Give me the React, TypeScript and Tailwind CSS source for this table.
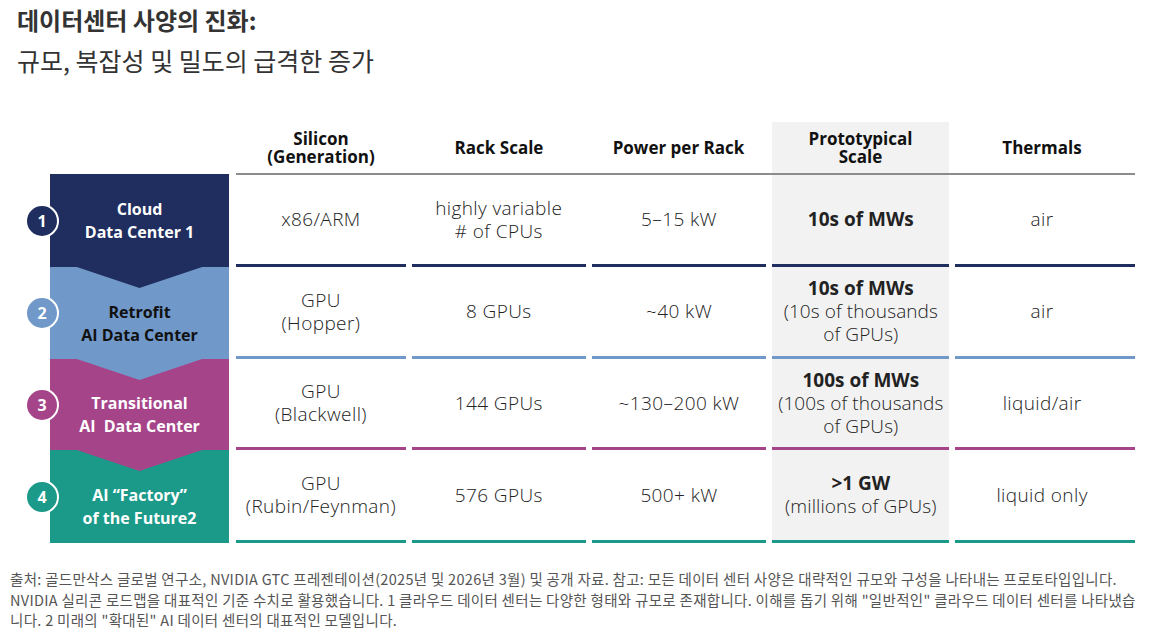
const rows = [
  {
    n: "1",
    label: ["Cloud", "Data Center 1"],
    color: "bg-[#1f2e5e]",
    line: "border-[#1f2e5e]",
    labelText: "text-white",
    h: "h-[92px]",
    silicon: ["x86/ARM"],
    rack: ["highly variable", "# of CPUs"],
    power: "5–15 kW",
    scaleBold: "10s of MWs",
    scale: [] as string[],
    thermals: "air",
  },
  {
    n: "2",
    label: ["Retrofit", "AI Data Center"],
    color: "bg-[#7098c9]",
    line: "border-[#7098c9]",
    labelText: "text-[#111]",
    h: "h-[92px]",
    silicon: ["GPU", "(Hopper)"],
    rack: ["8 GPUs"],
    power: "~40 kW",
    scaleBold: "10s of MWs",
    scale: ["(10s of thousands", "of GPUs)"],
    thermals: "air",
  },
  {
    n: "3",
    label: ["Transitional", "AI  Data Center"],
    color: "bg-[#a6448a]",
    line: "border-[#a6448a]",
    labelText: "text-white",
    h: "h-[91px]",
    silicon: ["GPU", "(Blackwell)"],
    rack: ["144 GPUs"],
    power: "~130–200 kW",
    scaleBold: "100s of MWs",
    scale: ["(100s of thousands", "of GPUs)"],
    thermals: "liquid/air",
  },
  {
    n: "4",
    label: ["AI “Factory”", "of the Future2"],
    color: "bg-[#1b9a89]",
    line: "border-[#1b9a89]",
    labelText: "text-white",
    h: "h-[93px]",
    silicon: ["GPU", "(Rubin/Feynman)"],
    rack: ["576 GPUs"],
    power: "500+ kW",
    scaleBold: ">1 GW",
    scale: ["(millions of GPUs)"],
    thermals: "liquid only",
  },
];

const tipColors = ["bg-[#1f2e5e]", "bg-[#7098c9]", "bg-[#a6448a]"];

const Cell = ({
  children,
  line,
  width,
  gray,
}: {
  children: React.ReactNode;
  line: string;
  width: string;
  gray?: boolean;
}) => (
  <div
    className={`${width} flex flex-col items-center justify-center border-b-[3px] text-center leading-[23px] ${line} ${
      gray ? "bg-[#f2f2f2]" : ""
    }`}
  >
    {children}
  </div>
);

const App = () => {
  return (
    <div
      className="w-[1155px] h-[639px] bg-white text-[#222] overflow-hidden"
      style={{ fontFamily: '"Open Sans", "Noto Sans CJK KR", sans-serif' }}
    >
      <div
        className="pl-[17px] text-[#333]"
        style={{ fontFamily: '"Noto Sans CJK KR", sans-serif' }}
      >
        <h1 className="text-[24px] font-bold leading-[40px]">
          데이터센터 사양의 진화:
        </h1>
        <h2 className="text-[25px] leading-[40px]">
          규모, 복잡성 및 밀도의 급격한 증가
        </h2>
      </div>

      <div className="mt-[42px]">
        {/* header */}
        <div className="flex h-[53px] ml-[236px] w-[899px] border-b-2 border-[#8c8c8c] text-[17px] font-bold leading-[18px] text-[#111]">
          <div className="w-[176px] pr-[6px] flex items-center justify-center text-center">
            Silicon
            <br />
            (Generation)
          </div>
          <div className="w-[179px] pr-[5px] flex items-center justify-center">
            Rack Scale
          </div>
          <div className="w-[181px] pr-[6px] flex items-center justify-center">
            Power per Rack
          </div>
          <div className="w-[177px] flex items-center justify-center text-center bg-[#f2f2f2]">
            Prototypical
            <br />
            Scale
          </div>
          <div className="w-[186px] pl-[6px] pr-[6px] flex items-center justify-center">
            Thermals
          </div>
        </div>

        {rows.map((r, i) => (
          <div key={r.n} className={`flex ${r.h} text-[19px] tracking-[0.4px] font-light`}>
            <div className="w-[236px] flex items-stretch tracking-normal">
              <div className="ml-[25px] self-center relative z-20 w-[34px] h-[34px] rounded-full flex items-center justify-center">
                <div
                  className={`absolute inset-0 rounded-full ${r.color} border-2 border-white`}
                />
                <span className="relative text-[16px] font-bold text-white">{r.n}</span>
              </div>
              <div
                className={`-ml-[9px] w-[179px] relative ${r.color} ${r.labelText} flex flex-col items-center justify-center text-[16px] font-bold leading-[23px] ${
                  i === 0 ? "-mt-[1px]" : "pt-[21px]"
                }`}
              >
                {i > 0 && (
                  <div
                    className={`absolute left-0 top-0 w-full h-[21px] z-10 ${tipColors[i - 1]} [clip-path:polygon(0_0,100%_0,100%_0,85%_0,50%_100%,15%_0,0_0)]`}
                  />
                )}
                <div className="relative z-10 text-center">
                  <div>{r.label[0]}</div>
                  <div className="whitespace-pre">{r.label[1]}</div>
                </div>
              </div>
            </div>
            <div className="flex gap-[6px] w-[899px]">
              <Cell line={r.line} width="w-[170px]">
                {r.silicon.map((s) => (
                  <div key={s}>{s}</div>
                ))}
              </Cell>
              <Cell line={r.line} width="w-[174px]">
                {r.rack.map((s) => (
                  <div key={s}>{s}</div>
                ))}
              </Cell>
              <Cell line={r.line} width="w-[175px]">
                {r.power}
              </Cell>
              <Cell line={r.line} width="w-[177px]" gray>
                <div className="font-bold tracking-normal">{r.scaleBold}</div>
                {r.scale.map((s) => (
                  <div key={s} className="tracking-[0.1px]">{s}</div>
                ))}
              </Cell>
              <Cell line={r.line} width="w-[180px]">
                <span className="pr-[6px]">{r.thermals}</span>
              </Cell>
            </div>
          </div>
        ))}
      </div>

      <div
        className="mt-[26px] pl-[10px] text-[14.5px] leading-[20.5px] text-[#555] whitespace-nowrap tracking-[0.3px]"
        style={{ fontFamily: '"Noto Sans CJK KR", sans-serif' }}
      >
        <div>
          출처: 골드만삭스 글로벌 연구소, NVIDIA GTC 프레젠테이션(2025년 및 2026년 3월) 및 공개 자료. 참고: 모든 데이터 센터 사양은 대략적인 규모와 구성을 나타내는 프로토타입입니다.
        </div>
        <div>
          NVIDIA 실리콘 로드맵을 대표적인 기준 수치로 활용했습니다. 1 클라우드 데이터 센터는 다양한 형태와 규모로 존재합니다. 이해를 돕기 위해 "일반적인" 클라우드 데이터 센터를 나타냈습
        </div>
        <div>니다. 2 미래의 "확대된" AI 데이터 센터의 대표적인 모델입니다.</div>
      </div>
    </div>
  );
};

export default App;
